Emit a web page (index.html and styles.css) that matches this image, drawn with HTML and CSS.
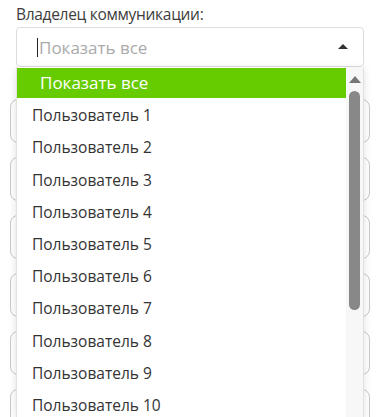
FILE: index.html
```html
<!DOCTYPE html>
<html lang="ru">
<head>
  <meta charset="UTF-8">
  <meta name="viewport" content="width=device-width, initial-scale=1.0">
  <title>Владелец коммуникации</title>
  <link rel="stylesheet" href="styles.css">
</head>
<body>
  <div class="form">
    <div class="field">
      <label class="label">Владелец коммуникации:</label>
      <div class="select">
        <span class="cursor"></span>
        <span class="placeholder">Показать все</span>
        <span class="arrow"></span>
      </div>
    </div>
    <div class="rows">
      <div class="row"></div>
      <div class="row"></div>
      <div class="row"></div>
      <div class="row"></div>
      <div class="row"></div>
      <div class="row"></div>
    </div>

    <div class="dropdown">
      <ul class="options">
        <li class="option active">Показать все</li>
        <li class="option">Пользователь 1</li>
        <li class="option">Пользователь 2</li>
        <li class="option">Пользователь 3</li>
        <li class="option">Пользователь 4</li>
        <li class="option">Пользователь 5</li>
        <li class="option">Пользователь 6</li>
        <li class="option">Пользователь 7</li>
        <li class="option">Пользователь 8</li>
        <li class="option">Пользователь 9</li>
        <li class="option">Пользователь 10</li>
      </ul>
      <div class="scrollbar">
        <span class="scroll-up"></span>
        <span class="thumb"></span>
      </div>
    </div>
  </div>
</body>
</html>
```

FILE: styles.css
```css
body {
  margin: 0;
  font-family: "Open Sans", Arial, sans-serif;
  background-color: #fff;
  color: #444;
  overflow: hidden;
}
.form {
  position: relative;
  height: 417px;
}
.field {
  padding: 2px 17px 0 16px;
}
.label {
  display: block;
  font-size: 15.5px;
  letter-spacing: -0.3px;
  line-height: 25px;
  color: #3d3d3d;
}
.select {
  display: flex;
  align-items: center;
  height: 40px;
  border: 1px solid #ddd;
  border-radius: 4px;
  padding: 0 15px 0 20px;
  box-sizing: border-box;
}
.cursor {
  width: 1px;
  height: 19px;
  background-color: #222;
  margin-right: 1px;
}
.placeholder {
  flex: 1;
  font-size: 17px;
  color: #aaa;
}
.arrow {
  width: 0;
  height: 0;
  border-left: 5px solid transparent;
  border-right: 5px solid transparent;
  border-bottom: 5px solid #333;
  margin-top: -1px;
}
.rows {
  display: flex;
  flex-direction: column;
  gap: 14px;
  padding: 32px 11px 0 10px;
}
.row {
  height: 44px;
  border: 1px solid #c8c8c8;
  border-radius: 8px;
  box-sizing: border-box;
}
.dropdown {
  position: absolute;
  top: 67px;
  left: 16px;
  width: 348px;
  bottom: 0;
  display: flex;
  background-color: #fff;
  border-left: 1px solid #e2e2e2;
  border-right: 1px solid #e2e2e2;
  box-sizing: border-box;
  box-shadow: 0 2px 8px rgba(0, 0, 0, 0.12);
}
.options {
  flex: 1;
  list-style: none;
  margin: 0;
  padding: 1px 0 0;
}
.option {
  height: 32.2px;
  line-height: 32px;
  padding-left: 15px;
  font-size: 15.5px;
  color: #333;
}
.option.active {
  height: 30px;
  line-height: 30px;
  margin-bottom: 1.2px;
  padding-left: 23px;
  background-color: #66cc00;
  color: #fff;
  font-size: 17px;
}
.scrollbar {
  width: 17px;
  background-color: #f7f7f7;
  display: flex;
  flex-direction: column;
  align-items: center;
  padding-top: 9px;
  box-sizing: border-box;
}
.scroll-up {
  width: 0;
  height: 0;
  border-left: 6px solid transparent;
  border-right: 6px solid transparent;
  border-bottom: 7px solid #777;
}
.thumb {
  width: 11px;
  height: 219px;
  margin-top: 8px;
  background-color: #888;
  border-radius: 6px;
}
```
